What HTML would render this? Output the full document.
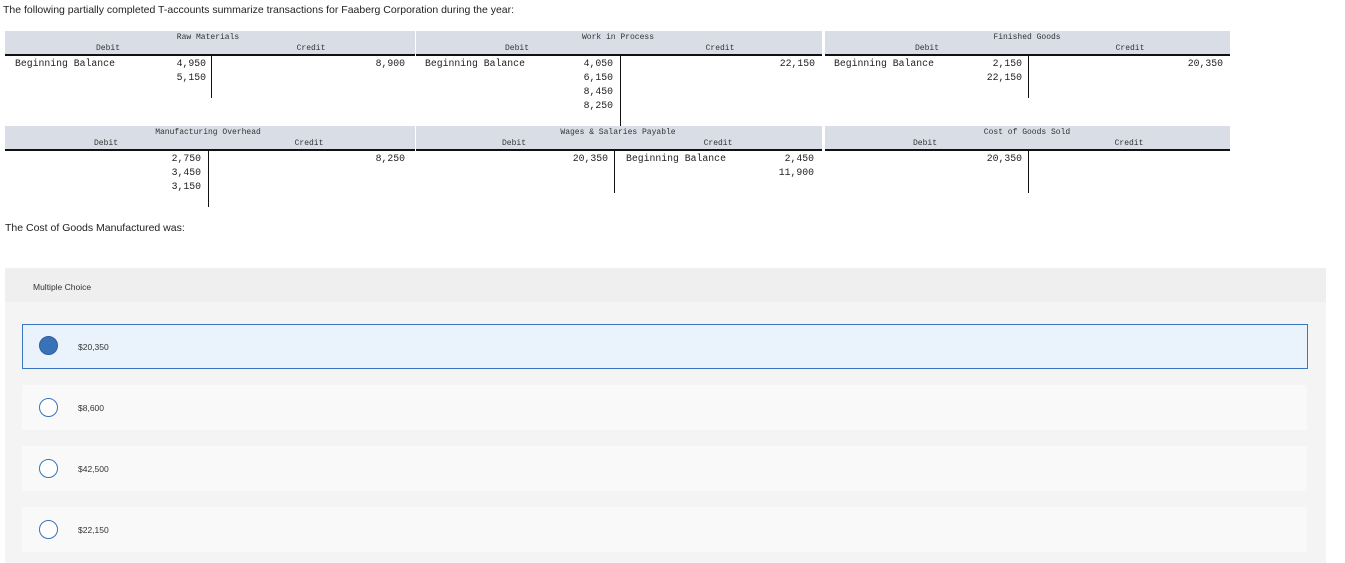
<!DOCTYPE html><html><head><style>
body{margin:0;width:1345px;height:563px;background:#fff;position:relative;overflow:hidden;font-family:"Liberation Sans",sans-serif;}
.a{position:absolute;}
.m{font-family:"Liberation Mono",monospace;font-size:9.8px;color:#222;white-space:nowrap;line-height:14px}
.h{position:absolute;background:#d9dde6;height:23px;border-bottom:2px solid #111}
.t{position:absolute;font-family:"Liberation Mono",monospace;font-size:8px;color:#333;white-space:nowrap;transform:translateX(-50%)}
.v{position:absolute;width:1px;background:#111}
.r{text-align:right}
.opt{position:absolute;left:22px;width:1285px;height:45px;background:#f9f9f9}
.rad{position:absolute;left:39px;width:17px;height:17px;border:1.5px solid #3a72b8;border-radius:50%;background:#fff}
.ot{position:absolute;left:78px;font-size:8.5px;color:#333}
</style></head><body>
<div class="a" style="left:3px;top:4px;font-size:10.5px;color:#222">The following partially completed T-accounts summarize transactions for Faaberg Corporation during the year:</div>

<div class="h" style="left:5px;top:31px;width:410px"></div>
<div class="h" style="left:416px;top:31px;width:406px"></div>
<div class="h" style="left:825px;top:31px;width:405px"></div>
<div class="t" style="left:208px;top:33px">Raw Materials</div>
<div class="t" style="left:108px;top:44px">Debit</div><div class="t" style="left:311px;top:44px">Credit</div>
<div class="t" style="left:618px;top:33px">Work in Process</div>
<div class="t" style="left:517px;top:44px">Debit</div><div class="t" style="left:720px;top:44px">Credit</div>
<div class="t" style="left:1027px;top:33px">Finished Goods</div>
<div class="t" style="left:927px;top:44px">Debit</div><div class="t" style="left:1130px;top:44px">Credit</div>

<div class="v" style="left:211px;top:56px;height:42px"></div>
<div class="v" style="left:620px;top:56px;height:70px"></div>
<div class="v" style="left:1028px;top:56px;height:42px"></div>

<div class="a m" style="left:15px;top:57px">Beginning Balance</div>
<div class="a m r" style="left:150px;width:56px;top:57px">4,950<br>5,150</div>
<div class="a m r" style="left:340px;width:65px;top:57px">8,900</div>
<div class="a m" style="left:425px;top:57px">Beginning Balance</div>
<div class="a m r" style="left:560px;width:53px;top:57px">4,050<br>6,150<br>8,450<br>8,250</div>
<div class="a m r" style="left:750px;width:65px;top:57px">22,150</div>
<div class="a m" style="left:834px;top:57px">Beginning Balance</div>
<div class="a m r" style="left:960px;width:62px;top:57px">2,150<br>22,150</div>
<div class="a m r" style="left:1150px;width:73px;top:57px">20,350</div>

<div class="h" style="left:5px;top:126px;width:410px"></div>
<div class="h" style="left:416px;top:126px;width:406px"></div>
<div class="h" style="left:825px;top:126px;width:405px"></div>
<div class="t" style="left:208px;top:128px">Manufacturing Overhead</div>
<div class="t" style="left:106px;top:139px">Debit</div><div class="t" style="left:309px;top:139px">Credit</div>
<div class="t" style="left:618px;top:128px">Wages &amp; Salaries Payable</div>
<div class="t" style="left:514px;top:139px">Debit</div><div class="t" style="left:718px;top:139px">Credit</div>
<div class="t" style="left:1027px;top:128px">Cost of Goods Sold</div>
<div class="t" style="left:925px;top:139px">Debit</div><div class="t" style="left:1129px;top:139px">Credit</div>

<div class="v" style="left:208px;top:151px;height:56px"></div>
<div class="v" style="left:614px;top:151px;height:42px"></div>
<div class="v" style="left:1028px;top:151px;height:42px"></div>

<div class="a m r" style="left:140px;width:61px;top:152px">2,750<br>3,450<br>3,150</div>
<div class="a m r" style="left:340px;width:65px;top:152px">8,250</div>
<div class="a m r" style="left:540px;width:68px;top:152px">20,350</div>
<div class="a m" style="left:626px;top:152px">Beginning Balance</div>
<div class="a m r" style="left:750px;width:64px;top:152px">2,450<br>11,900</div>
<div class="a m r" style="left:960px;width:62px;top:152px">20,350</div>

<div class="a" style="left:5px;top:222px;font-size:10.5px;color:#222">The Cost of Goods Manufactured was:</div>

<div class="a" style="left:5px;top:268px;width:1321px;height:295px;background:#f4f4f4"></div>
<div class="a" style="left:5px;top:268px;width:1321px;height:34px;background:#efefef"></div>
<div class="a" style="left:33px;top:282px;font-size:8.5px;color:#333">Multiple Choice</div>

<div class="opt" style="top:324px;background:#eaf2fb;border:1px solid #3a76c0;width:1284px;height:43px"></div>
<div class="a" style="left:39px;top:336px;width:19px;height:19px;border-radius:50%;background:#3a72b8;border:1px solid #2d5f9e;box-sizing:border-box"></div>
<div class="ot" style="top:342px">$20,350</div>

<div class="opt" style="top:385px"></div>
<div class="rad" style="top:398px"></div>
<div class="ot" style="top:403px">$8,600</div>

<div class="opt" style="top:446px"></div>
<div class="rad" style="top:459px"></div>
<div class="ot" style="top:464px">$42,500</div>

<div class="opt" style="top:507px"></div>
<div class="rad" style="top:520px"></div>
<div class="ot" style="top:525px">$22,150</div>
</body></html>
